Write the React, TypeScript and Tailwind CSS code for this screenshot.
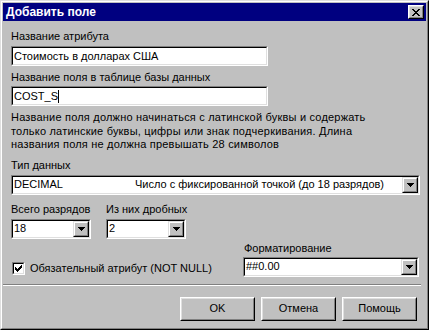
import React from "react";

function Sunken({ className = "", children }: { className?: string; children?: React.ReactNode }) {
  return (
    <div className={`border border-t-[#808080] border-l-[#808080] border-b-white border-r-white ${className}`}>
      <div className="h-full border border-t-black border-l-black border-b-[#dfdfdf] border-r-[#dfdfdf] bg-white flex items-center">
        {children}
      </div>
    </div>
  );
}

function Arrow() {
  return (
    <svg width="7" height="4" viewBox="0 0 7 4" shapeRendering="crispEdges">
      <rect x="0" y="0" width="7" height="1" fill="#000" />
      <rect x="1" y="1" width="5" height="1" fill="#000" />
      <rect x="2" y="2" width="3" height="1" fill="#000" />
      <rect x="3" y="3" width="1" height="1" fill="#000" />
    </svg>
  );
}

function DropBtn() {
  return (
    <div className="w-[16px] h-[16px] shrink-0 border border-t-[#dfdfdf] border-l-[#dfdfdf] border-b-black border-r-black">
      <div className="h-full border border-t-white border-l-white border-b-[#808080] border-r-[#808080] bg-[#c0c0c0] flex items-center justify-center">
        <Arrow />
      </div>
    </div>
  );
}

function Combo({ className = "", children }: { className?: string; children?: React.ReactNode }) {
  return (
    <Sunken className={`h-[20px] ${className}`}>
      <div className="flex-1 pl-[1px] leading-[13px] whitespace-nowrap overflow-hidden flex">{children}</div>
      <DropBtn />
    </Sunken>
  );
}

function Button({ children }: { children: React.ReactNode }) {
  return (
    <div className="w-[75px] h-[24px] border border-t-white border-l-white border-b-black border-r-black">
      <div className="h-full border border-t-[#dfdfdf] border-l-[#dfdfdf] border-b-[#808080] border-r-[#808080] bg-[#c0c0c0] flex items-center justify-center">
        {children}
      </div>
    </div>
  );
}

function Check() {
  const px: [number, number][] = [
    [6, 0],
    [5, 1], [6, 1],
    [0, 2], [4, 2], [5, 2], [6, 2],
    [0, 3], [1, 3], [3, 3], [4, 3], [5, 3],
    [0, 4], [1, 4], [2, 4], [3, 4], [4, 4],
    [1, 5], [2, 5], [3, 5],
    [2, 6],
  ];
  return (
    <svg width="7" height="7" viewBox="0 0 7 7" shapeRendering="crispEdges">
      {px.map(([x, y], i) => (
        <rect key={i} x={x} y={y} width="1" height="1" fill="#000" />
      ))}
    </svg>
  );
}

function CloseX() {
  const rows = [
    "XX....XX",
    ".XX..XX.",
    "..XXXX..",
    "...XX...",
    "..XXXX..",
    ".XX..XX.",
    "XX....XX",
  ];
  const rects: React.ReactNode[] = [];
  rows.forEach((r, y) =>
    r.split("").forEach((c, x) => {
      if (c === "X") rects.push(<rect key={`${x}-${y}`} x={x} y={y} width="1" height="1" fill="#000" />);
    })
  );
  return (
    <svg width="8" height="7" viewBox="0 0 8 7" shapeRendering="crispEdges">
      {rects}
    </svg>
  );
}

export default function App() {
  return (
    <div className="w-[429px] h-[330px] bg-[#c0c0c0] border border-t-[#dfdfdf] border-l-[#dfdfdf] border-r-black border-b-black font-['Liberation_Sans',Arial,sans-serif] text-[11px] text-black">
      <div className="h-full border border-t-white border-l-white border-r-[#808080] border-b-[#808080] p-px flex flex-col">
        <div className="h-[18px] bg-[#000080] flex items-center justify-between pl-[3px] pr-[2px]">
          <span className="text-white font-bold text-[12px] leading-[14px]">Добавить поле</span>
          <div className="w-[16px] h-[14px] border border-t-white border-l-white border-b-black border-r-black">
            <div className="h-full border border-t-[#dfdfdf] border-l-[#dfdfdf] border-b-[#808080] border-r-[#808080] bg-[#c0c0c0] flex items-center justify-center">
              <CloseX />
            </div>
          </div>
        </div>

        <div className="pl-[8px] flex flex-col">
          <div className="mt-[9px] leading-[13px] h-[13px]">Название атрибута</div>
          <Sunken className="mt-[3px] h-[20px] w-[257px]">
            <span className="pl-[1px] leading-[13px]">Стоимость в долларах США</span>
          </Sunken>
          <div className="mt-[5px] leading-[13px] h-[13px]">Название поля в таблице базы данных</div>
          <Sunken className="mt-[2px] h-[20px] w-[257px]">
            <span className="pl-[1px] leading-[13px]">COST_S</span>
            <span className="w-px h-[13px] bg-black" />
          </Sunken>
          <p className="mt-[5px] leading-[13.5px] w-[366px] tracking-[0.2px]">
            Название поля должно начинаться с латинской буквы и содержать только латинские буквы, цифры или знак подчеркивания. Длина названия поля не должна превышать 28 символов
          </p>
          <div className="mt-[7px] leading-[13px] h-[13px]">Тип данных</div>
          <Combo className="mt-[3px] w-[409px]">
            <span className="w-[121px]">DECIMAL</span>
            <span>Число с фиксированной точкой (до 18 разрядов)</span>
          </Combo>

          <div className="flex items-end">
            <div className="w-[232px] flex flex-col">
              <div className="mt-[8px] flex gap-[15px]">
                <div className="flex flex-col">
                  <div className="leading-[13px] h-[13px]">Всего разрядов</div>
                  <Combo className="mt-[3px] w-[80px]">
                    <span>18</span>
                  </Combo>
                </div>
                <div className="flex flex-col">
                  <div className="leading-[13px] h-[13px]">Из них дробных</div>
                  <Combo className="mt-[3px] w-[80px]">
                    <span>2</span>
                  </Combo>
                </div>
              </div>
              <div className="mt-[21px] h-[17px] flex items-center">
                <div className="ml-[1px] w-[13px] h-[13px] border border-t-[#808080] border-l-[#808080] border-b-white border-r-white">
                  <div className="h-full border border-t-black border-l-black border-b-[#dfdfdf] border-r-[#dfdfdf] bg-white flex items-center justify-center">
                    <Check />
                  </div>
                </div>
                <span className="ml-[5px] leading-[13px]">Обязательный атрибут (NOT NULL)</span>
              </div>
            </div>
            <div className="flex flex-col">
              <div className="pl-px leading-[13px] h-[13px]">Форматирование</div>
              <Combo className="mt-[2px] w-[176px]">
                <span>##0.00</span>
              </Combo>
            </div>
          </div>
        </div>

        <div className="mt-[7px] mr-[5px] border-t border-t-[#808080] border-b border-b-white" />

        <div className="mt-[11px] pr-[9px] flex justify-end gap-[6px]">
          <Button>OK</Button>
          <Button>Отмена</Button>
          <Button>Помощь</Button>
        </div>
      </div>
    </div>
  );
}
